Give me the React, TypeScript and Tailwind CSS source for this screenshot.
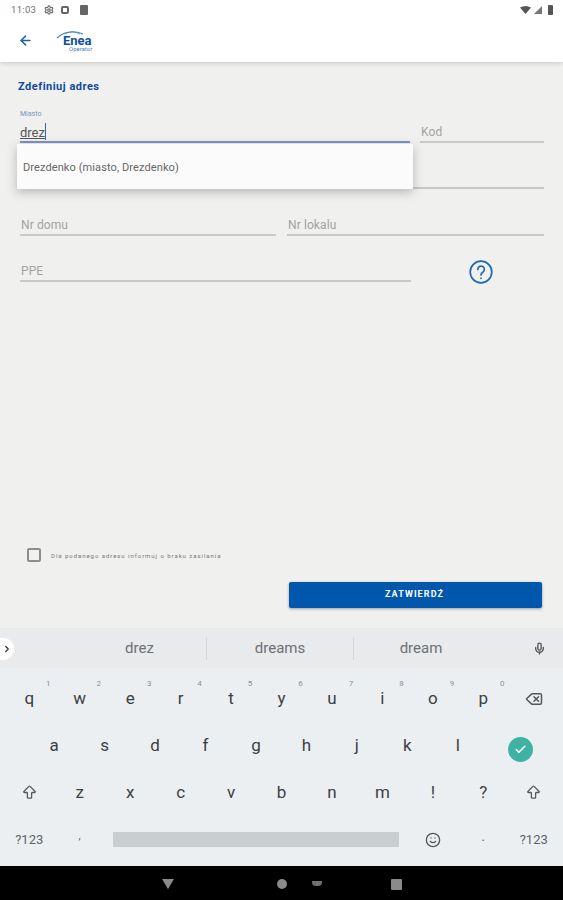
import React from 'react';
import { ArrowLeft, ArrowBigUp, Check, ChevronRight, Delete, Mic, Settings, Smile } from 'lucide-react';

const topRow = [
  ['q', '1'], ['w', '2'], ['e', '3'], ['r', '4'], ['t', '5'],
  ['y', '6'], ['u', '7'], ['i', '8'], ['o', '9'], ['p', '0'],
];
const homeRow = ['a', 's', 'd', 'f', 'g', 'h', 'j', 'k', 'l'];
const bottomRow = ['z', 'x', 'c', 'v', 'b', 'n', 'm', '!', '?'];

const Key = ({ label, hint }: { label: string; hint?: string }) => (
  <div className="relative flex h-full items-center justify-center text-[17px] text-[#3c4043]">
    {label}
    {hint && <span className="absolute left-[42px] top-[5px] text-[8px] leading-none text-[#8b8f93]">{hint}</span>}
  </div>
);

const Field = ({ label, className }: { label?: string; className: string }) => (
  <div className={`flex items-end border-b-[2px] border-[#c9c9c8] pb-[1px] pl-[1px] text-[12px] leading-[16px] tracking-[0.1px] text-[#a3a3a3] ${className}`}>
    {label}
  </div>
);

export default function App() {
  return (
    <div className="flex h-[900px] w-[563px] flex-col overflow-hidden bg-[#f0f0ef] font-['Roboto',sans-serif]">
      {/* Status bar + app bar */}
      <header className="relative z-10 h-[62px] bg-white shadow-[0_1px_5px_rgba(0,0,0,0.18)]">
        <div className="flex h-[20px] items-center pl-[11px] pr-[10px] text-[#6f6f6f]">
          <span className="w-[33px] text-[9.5px] tracking-[0.3px]">11:03</span>
          <Settings size={10} strokeWidth={3} className="mr-[7px]" />
          <div className="mr-[11px] h-[8px] w-[8px] rounded-[2px] border-[2px] border-[#666]" />
          <div className="h-[10px] w-[8px] rounded-[1px] bg-[#666]" />
          <div className="ml-auto flex items-center gap-[3px]">
            <svg width="11" height="8" viewBox="0 0 11 8"><path d="M0 1.5 Q5.5 -1.5 11 1.5 L5.5 8 Z" fill="#555" /></svg>
            <svg width="8" height="8" viewBox="0 0 8 8"><path d="M8 0V8H0Z" fill="#777" /></svg>
            <div className="ml-[3px] h-[10px] w-[5px] rounded-[1px] bg-[#555]" />
          </div>
        </div>
        <div className="flex h-[40px] items-center pl-[18px]">
          <ArrowLeft size={15} strokeWidth={2.4} className="text-[#1d62ab]" />
          <div className="relative ml-[23px] h-[24px] w-[37px]">
            <svg width="30" height="10" viewBox="0 0 30 10" className="absolute left-0 top-[1px]">
              <path d="M1 9 Q12 -1 27 5" fill="none" stroke="#3d86c6" strokeWidth="1.2" />
              <path d="M8 5 Q17 1 24 5" fill="none" stroke="#3d86c6" strokeWidth="0.8" />
            </svg>
            <span className="absolute left-[7px] top-[8px] text-[13px] font-bold leading-[10px] text-[#0f4f9e]">Enea</span>
            <span className="absolute left-[13px] top-[18px] text-[6px] leading-none text-[#4d7fb8]">Operator</span>
          </div>
        </div>
      </header>

      {/* Form */}
      <main className="relative flex flex-1 flex-col pt-[18px]">
        <h1 className="h-[14px] pl-[18px] text-[11px] font-bold leading-[14px] tracking-[0.5px] text-[#0f4aa0]">Zdefiniuj adres</h1>
        <div className="pl-[20px] pr-[19px]">
          <div className="flex h-[49px] gap-[10px]">
            <div className="relative flex w-[390px] items-end border-b-[2px] border-[#7f93c9] text-[13px] leading-[16px] text-[#555]">
              <span className="absolute left-0 top-[17px] text-[7px] leading-none text-[#7d93c4]">Miasto</span>
              <span className="underline">drez</span>
              <span className="mb-[1px] h-[17px] w-px bg-[#3b62b0]" />
            </div>
            <Field label="Kod" className="flex-1" />
          </div>
          <div className="flex h-[46px]"><Field className="flex-1" /></div>
          <div className="flex h-[47px] gap-[11px]">
            <Field label="Nr domu" className="w-[256px]" />
            <Field label="Nr lokalu" className="flex-1" />
          </div>
          <div className="flex h-[46px]">
            <Field label="PPE" className="w-[391px]" />
            <svg width="24" height="24" viewBox="0 0 24 24" className="ml-[58px] mt-[24px] text-[#1f69ad]" fill="none" stroke="currentColor" strokeWidth="1.7" strokeLinecap="round">
              <circle cx="12" cy="12" r="10.8" />
              <path d="M8.8 9.4a3.3 3.3 0 1 1 5 2.8c-1.2.8-1.8 1.4-1.8 2.8" />
              <path d="M12 18.2v.1" />
            </svg>
          </div>
        </div>

        {/* Autocomplete dropdown */}
        <div className="absolute left-[17px] top-[82px] flex h-[45px] w-[396px] items-center bg-[#fbfbfb] pl-[6px] pt-[3px] text-[11px] tracking-[0.1px] text-[#666] shadow-[0_3px_10px_rgba(0,0,0,0.25)]">
          Drezdenko (miasto, Drezdenko)
        </div>

        <div className="mt-auto flex items-center pl-[27px]">
          <div className="h-[14px] w-[14px] rounded-[2px] border-[2px] border-[#8d8d8d]" />
          <span className="ml-[10px] text-[6px] tracking-[0.95px] text-[#777]">Dla podanego adresu informuj o braku zasilania</span>
        </div>
        <div className="flex justify-end pb-[20px] pl-[289px] pr-[21px] pt-[20px]">
          <button className="flex h-[26px] w-full items-center justify-center rounded-[2px] bg-[#0057ab] pr-[2px] text-[9px] font-bold tracking-[1.1px] text-white shadow-[0_1px_3px_rgba(0,0,0,0.35)]">
            ZATWIERDŹ
          </button>
        </div>
      </main>

      {/* Suggestion strip */}
      <div className="flex h-[40px] items-center bg-[#e8eaeb] pt-[1px] text-[15px] text-[#6d7176]">
        <div className="flex h-[22px] w-[14px] items-center justify-center rounded-r-full bg-white">
          <ChevronRight size={10} strokeWidth={3} className="text-[#333]" />
        </div>
        <div className="ml-[59px] w-[134px] border-r border-[#d5d8da] text-center">drez</div>
        <div className="w-[147px] border-r border-[#d5d8da] text-center">dreams</div>
        <div className="w-[134px] text-center">dream</div>
        <Mic size={13} strokeWidth={2.5} className="ml-[45px] text-[#555]" />
      </div>

      {/* Keyboard */}
      <div className="flex h-[198px] flex-col bg-[#eceff1] px-[4px] pb-[3px] pt-[7px]">
        <div className="grid flex-1 grid-cols-11">
          {topRow.map(([k, n]) => <Key key={k} label={k} hint={n} />)}
          <div className="flex items-center justify-center">
            <Delete size={18} className="text-[#55585b]" />
          </div>
        </div>
        <div className="flex flex-1 pl-[25px]">
          {homeRow.map((k) => <div key={k} className="w-[50.45px]"><Key label={k} /></div>)}
          <div className="flex flex-1 items-center justify-center pt-[8px]">
            <div className="flex h-[25px] w-[25px] items-center justify-center rounded-full bg-[#3fb3a3]">
              <Check size={13} strokeWidth={3} className="text-white" />
            </div>
          </div>
        </div>
        <div className="grid flex-1 grid-cols-11">
          <div className="flex items-center justify-center"><ArrowBigUp size={17} strokeWidth={1.8} className="text-[#55585b]" /></div>
          {bottomRow.map((k) => <Key key={k} label={k} />)}
          <div className="flex items-center justify-center"><ArrowBigUp size={17} strokeWidth={1.8} className="text-[#55585b]" /></div>
        </div>
        <div className="grid flex-1 grid-cols-11 items-center text-[13px] text-[#5f6368]">
          <div className="text-center">?123</div>
          <div className="pb-[6px] text-center text-[11px]">,</div>
          <div className="col-span-6 ml-[8px] mr-[9px] h-[15px] rounded-[1px] bg-[#c9ced1]" />
          <div className="flex justify-center"><Smile size={16} className="text-[#55585b]" /></div>
          <div className="pb-[6px] text-center">.</div>
          <div className="text-center">?123</div>
        </div>
      </div>

      {/* Navigation bar */}
      <nav className="relative h-[34px] bg-black">
        <div className="absolute left-[162px] top-[13px] h-0 w-0 border-x-[6px] border-t-[10px] border-x-transparent border-t-[#8a8a8a]" />
        <div className="absolute left-[277px] top-[13px] h-[10px] w-[10px] rounded-full bg-[#8a8a8a]" />
        <div className="absolute left-[312px] top-[15px] h-[5px] w-[10px] rounded-b-[4px] bg-[#6f6f6f]" />
        <div className="absolute left-[391px] top-[13px] h-[11px] w-[11px] rounded-[1px] bg-[#8a8a8a]" />
      </nav>
    </div>
  );
}
